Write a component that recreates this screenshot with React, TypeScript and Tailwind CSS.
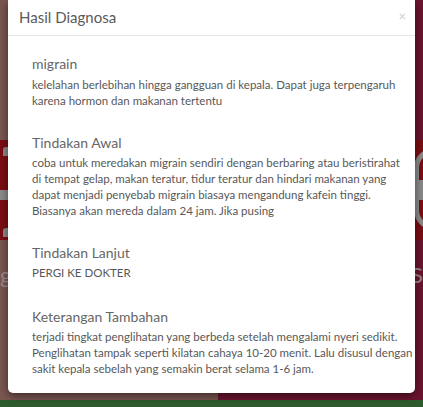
import React from "react";

const font = { fontFamily: "Lato, 'Open Sans', sans-serif" };

export default function App() {
  return (
    <div className="relative w-[423px] h-[407px] overflow-hidden" style={font}>
      {/* page behind backdrop */}
      <div className="absolute inset-0 flex flex-col">
        <div className="flex h-[140px]">
          <div className="w-[218px] bg-[#7a5650]" />
          <div className="flex-1 bg-[#6c1430]" />
        </div>
        <div className="relative h-[100px] bg-[#7b0d14]">
          <div className="absolute left-[3px] top-[7px] w-[6px] h-[9px] bg-[#8a8a8a] rounded-tl-[3px]" />
          <div className="absolute left-0 top-[50px] w-[9px] h-[10px] bg-[#8a8a8a]" />
          <div className="absolute left-[3px] top-[88px] w-[6px] h-[9px] bg-[#8a8a8a] rounded-tl-[3px]" />
          <div className="absolute left-[414px] top-[8px] w-[40px] h-[82px] rounded-full border-[5px] border-[#8a8a8a]" />
          <div className="absolute left-[418px] top-[40px] w-[8px] h-[20px] bg-[#8a8a8a]" />
        </div>
        <div className="flex flex-1">
          <div className="relative w-[218px] bg-[#7a5650]">
            <span className="absolute left-0 top-[22px] text-[22px] leading-[26px] text-[#9a8a88]">ge</span>
          </div>
          <div className="relative flex-1 bg-[#6c1430]">
            <span className="absolute right-0 top-[22px] text-[22px] leading-[26px] text-[#9a8a8c]">aS</span>
          </div>
        </div>
        <div className="h-[7px] bg-[#2e5b2e]" />
      </div>

      {/* modal */}
      <div className="absolute left-[8px] top-0 w-[407px] h-[393px] bg-white rounded-b-[5px] shadow-[0_3px_8px_rgba(0,0,0,0.5)]">
        <div className="flex items-center justify-between h-[36px] pl-[11px] pr-[8px] border-b border-[#e5e5e5]">
          <span className="text-[15px] text-[#5a5a5a]">Hasil Diagnosa</span>
          <span className="text-[13px] leading-none text-[#cfcfcf] mr-[1px] mb-[3px]">×</span>
        </div>
        <div className="pl-[24px] pr-[8px] pt-[18px] text-[#585858] whitespace-nowrap">
          <div className="text-[14px] leading-[20px] text-[#666]">migrain</div>
          <p className="mt-[3px] text-[11.5px] leading-[16px]">
            kelelahan berlebihan hingga gangguan di kepala. Dapat juga terpengaruh
            <br />
            karena hormon dan makanan tertentu
          </p>
          <div className="mt-[24px] text-[14px] leading-[20px] text-[#666]">Tindakan Awal</div>
          <p className="mt-[2px] text-[11.5px] leading-[16px]">
            coba untuk meredakan migrain sendiri dengan berbaring atau beristirahat
            <br />
            di tempat gelap, makan teratur, tidur teratur dan hindari makanan yang
            <br />
            dapat menjadi penyebab migrain biasaya mengandung kafein tinggi.
            <br />
            Biasanya akan mereda dalam 24 jam. Jika pusing
          </p>
          <div className="mt-[24px] text-[14px] leading-[20px] text-[#666]">Tindakan Lanjut</div>
          <p className="mt-[2px] text-[11.5px] leading-[16px]">PERGI KE DOKTER</p>
          <div className="mt-[26px] text-[14px] leading-[20px] text-[#666]">Keterangan Tambahan</div>
          <p className="mt-[2px] text-[11.5px] leading-[16px]">
            terjadi tingkat penglihatan yang berbeda setelah mengalami nyeri sedikit.
            <br />
            Penglihatan tampak seperti kilatan cahaya 10-20 menit. Lalu disusul dengan
            <br />
            sakit kepala sebelah yang semakin berat selama 1-6 jam.
          </p>
        </div>
      </div>
    </div>
  );
}
